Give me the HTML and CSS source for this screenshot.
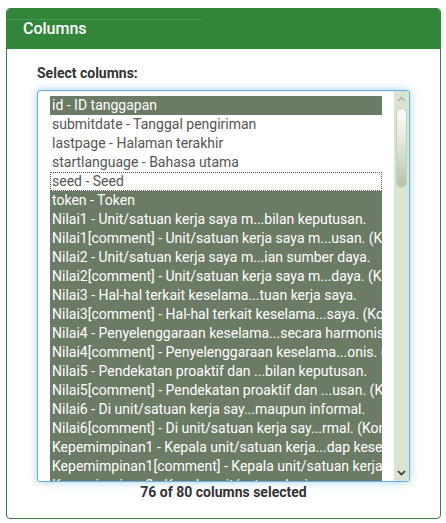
FILE: index.html
```html
<!DOCTYPE html>
<html>
<head>
<meta charset="utf-8">
<link rel="stylesheet" href="styles.css">
</head>
<body>
<div class="panel">
  <div class="panel-head">
    <div class="head-rule"></div>
    <div class="panel-title">Columns</div>
  </div>
  <div class="panel-body">
    <div class="label">Select columns:</div>
    <div class="select">
      <div class="options">
        <div class="opt sel">id - ID tanggapan</div>
        <div class="opt">submitdate - Tanggal pengiriman</div>
        <div class="opt">lastpage - Halaman terakhir</div>
        <div class="opt">startlanguage - Bahasa utama</div>
        <div class="opt focus">seed - Seed</div>
        <div class="opt sel">token - Token</div>
        <div class="opt sel">Nilai1 - Unit/satuan kerja saya m...bilan keputusan.</div>
        <div class="opt sel">Nilai1[comment] - Unit/satuan kerja saya m...usan. (Komentar)</div>
        <div class="opt sel">Nilai2 - Unit/satuan kerja saya m...ian sumber daya.</div>
        <div class="opt sel">Nilai2[comment] - Unit/satuan kerja saya m...daya. (Komentar)</div>
        <div class="opt sel">Nilai3 - Hal-hal terkait keselama...tuan kerja saya.</div>
        <div class="opt sel">Nilai3[comment] - Hal-hal terkait keselama...saya. (Komentar)</div>
        <div class="opt sel">Nilai4 - Penyelenggaraan keselama...secara harmonis.</div>
        <div class="opt sel">Nilai4[comment] - Penyelenggaraan keselama...onis. (Komentar)</div>
        <div class="opt sel">Nilai5 - Pendekatan proaktif dan ...bilan keputusan.</div>
        <div class="opt sel">Nilai5[comment] - Pendekatan proaktif dan ...usan. (Komentar)</div>
        <div class="opt sel">Nilai6 - Di unit/satuan kerja say...maupun informal.</div>
        <div class="opt sel">Nilai6[comment] - Di unit/satuan kerja say...rmal. (Komentar)</div>
        <div class="opt sel">Kepemimpinan1 - Kepala unit/satuan kerja...dap keselamatan.</div>
        <div class="opt sel">Kepemimpinan1[comment] - Kepala unit/satuan kerja...</div>
        <div class="opt sel">Kepemimpinan2 - Kepala unit/satuan kerja...</div>
      </div>
      <div class="scrollbar">
        <div class="sb-btn"><svg width="9" height="6" viewBox="0 0 9 6"><path d="M1 5 L4.5 1.5 L8 5" fill="none" stroke="#aab3a6" stroke-width="1.4"/></svg></div>
        <div class="sb-thumb"></div>
        <div class="sb-track"></div>
        <div class="sb-btn"><svg width="9" height="6" viewBox="0 0 9 6"><path d="M1 1 L4.5 4.5 L8 1" fill="none" stroke="#333" stroke-width="1.6"/></svg></div>
      </div>
    </div>
    <div class="count">76 of 80 columns selected</div>
  </div>
</div>
</body>
</html>
```
FILE: styles.css
```css
html, body {
  margin: 0;
  padding: 0;
  background: #fff;
}
body {
  font-family: Roboto, "Liberation Sans", sans-serif;
}
.panel {
  margin: 8px 0 0 6px;
  width: 435px;
  box-sizing: border-box;
  border: 1px solid #32853a;
  border-radius: 4px;
  overflow: hidden;
}
.panel-head {
  background: #33853a;
  height: 40px;
  box-sizing: border-box;
  padding-top: 10px;
}
.head-rule {
  width: 194px;
  height: 1px;
  background: #4b9a51;
}
.panel-title {
  color: #fff;
  font-size: 16px;
  font-weight: 500;
  line-height: 18px;
  padding-left: 16px;
}
.panel-body {
  padding: 16px 30px 17px 30px;
}
.label {
  font-size: 14px;
  font-weight: 700;
  line-height: 17px;
  color: #333;
  margin-bottom: 8px;
}
.select {
  display: flex;
  width: 373px;
  height: 392px;
  box-sizing: border-box;
  border: 1px solid #66afe9;
  border-radius: 3px;
  box-shadow: inset 0 1px 1px rgba(0,0,0,.075), 0 0 8px rgba(102,175,233,.6);
  background: #fff;
  overflow: hidden;
}
.options {
  flex: 1;
  min-width: 0;
  padding: 5px 12px 0 12px;
  overflow: hidden;
}
.opt {
  height: 19px;
  line-height: 19px;
  font-size: 14px;
  color: #555;
  white-space: nowrap;
  overflow: hidden;
  padding-left: 2px;
}
.opt.sel {
  background: #6c7b65;
  color: #fff;
}
.opt.focus {
  outline: 1px dotted #555;
  outline-offset: -1px;
}
.scrollbar {
  width: 15px;
  flex: none;
  background: #d9e4d2;
  display: flex;
  flex-direction: column;
}
.sb-btn {
  height: 16px;
  display: flex;
  align-items: center;
  justify-content: center;
  flex: none;
}
.sb-thumb {
  width: 11px;
  height: 80px;
  margin: 1px auto 0;
  box-sizing: border-box;
  border-radius: 6px;
  border: 1px solid #c3d2ba;
  background: linear-gradient(#fbfcfa, #e2e9de 40%, #b2c5a8);
  flex: none;
}
.sb-track {
  flex: 1;
}
.count {
  margin-top: 2px;
  font-size: 14px;
  font-weight: 700;
  line-height: 17px;
  color: #333;
  text-align: center;
  width: 373px;
}
```
